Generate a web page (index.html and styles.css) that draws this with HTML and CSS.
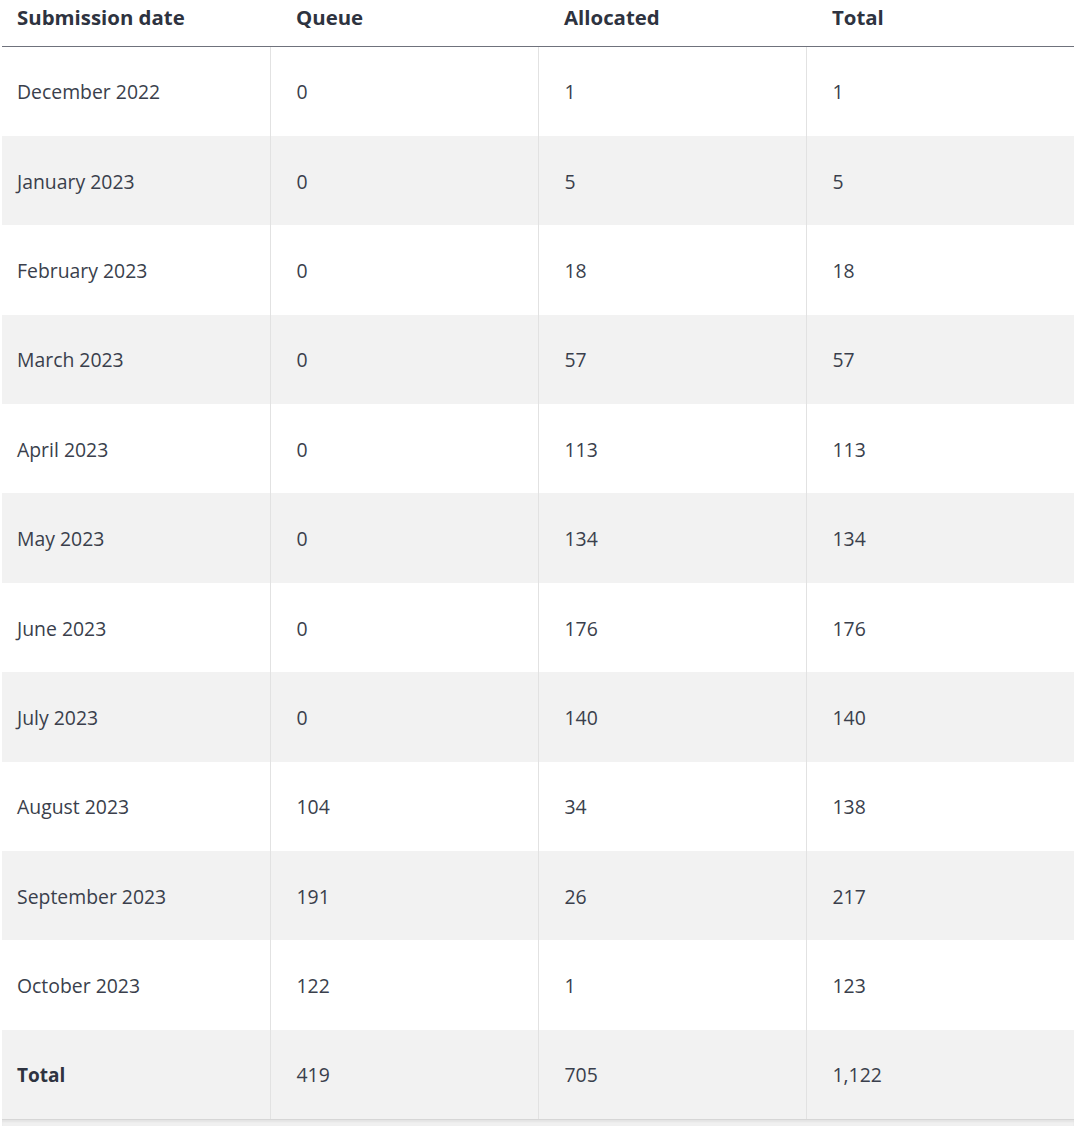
FILE: index.html
```html
<!DOCTYPE html>
<html lang="en">
<head>
<meta charset="utf-8">
<title>Submissions</title>
<link rel="stylesheet" href="styles.css">
</head>
<body>
<div class="wrap">
<table class="data">
  <thead>
    <tr><th>Submission date</th><th>Queue</th><th>Allocated</th><th>Total</th></tr>
  </thead>
  <tbody>
    <tr><td>December 2022</td><td>0</td><td>1</td><td>1</td></tr>
    <tr><td>January 2023</td><td>0</td><td>5</td><td>5</td></tr>
    <tr><td>February 2023</td><td>0</td><td>18</td><td>18</td></tr>
    <tr><td>March 2023</td><td>0</td><td>57</td><td>57</td></tr>
    <tr><td>April 2023</td><td>0</td><td>113</td><td>113</td></tr>
    <tr><td>May 2023</td><td>0</td><td>134</td><td>134</td></tr>
    <tr><td>June 2023</td><td>0</td><td>176</td><td>176</td></tr>
    <tr><td>July 2023</td><td>0</td><td>140</td><td>140</td></tr>
    <tr><td>August 2023</td><td>104</td><td>34</td><td>138</td></tr>
    <tr><td>September 2023</td><td>191</td><td>26</td><td>217</td></tr>
    <tr><td>October 2023</td><td>122</td><td>1</td><td>123</td></tr>
    <tr class="total"><td>Total</td><td>419</td><td>705</td><td>1,122</td></tr>
  </tbody>
</table>
<div class="foot"></div>
</div>
</body>
</html>
```

FILE: styles.css
```css
html, body {
  margin: 0;
  padding: 0;
  background: #ffffff;
}
body {
  font-family: "Open Sans", "Noto Sans", "Liberation Sans", sans-serif;
  color: #3a3f4c;
}
.wrap {
  width: 1072px;
  margin-left: 2px;
}
.data {
  width: 1072px;
  border-collapse: collapse;
  table-layout: fixed;
}
.data th {
  font-size: 20.4px;
  font-weight: 700;
  color: #2e3340;
  text-align: left;
  line-height: 26px;
  height: 46px;
  padding: 4px 0 16px 26px;
  box-sizing: border-box;
  vertical-align: top;
  border-bottom: 1px solid #6f727c;
}
.data th:first-child,
.data td:first-child {
  padding-left: 15px;
}
.data td {
  font-size: 19.4px;
  line-height: 24px;
  height: 89.4px;
  padding: 2px 0 0 26px;
  box-sizing: border-box;
  vertical-align: middle;
}
.data td + td {
  border-left: 1px solid #e2e2e2;
}
.data tbody tr:nth-child(even) {
  background: #f2f2f2;
}
.data tr.total td {
  border-bottom: 1px solid #d6d6d6;
}
.data tr.total td:first-child {
  font-size: 19px;
  font-weight: 700;
  color: #2e3340;
}
.foot {
  height: 6px;
  background: #f0f0f0;
  box-shadow: inset 0 2px 2px rgba(0, 0, 0, 0.05);
}
```
